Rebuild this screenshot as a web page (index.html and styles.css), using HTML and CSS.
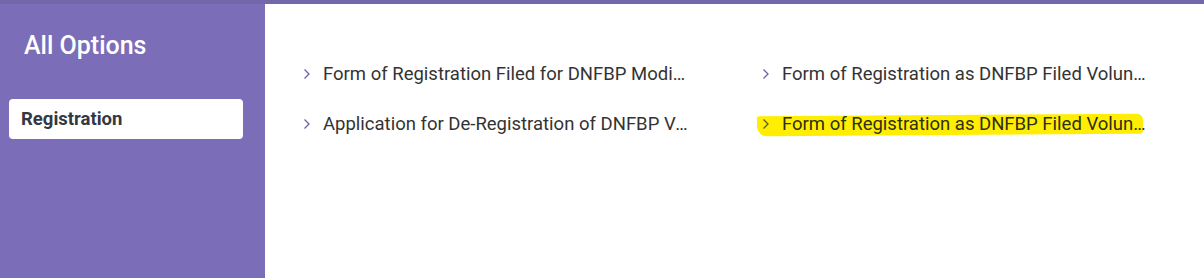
FILE: index.html
```html
<!DOCTYPE html>
<html lang="en">
<head>
  <meta charset="UTF-8">
  <meta name="viewport" content="width=device-width, initial-scale=1.0">
  <title>All Options</title>
  <link rel="stylesheet" href="styles.css">
</head>
<body>
  <div class="topbar"></div>
  <div class="page">
    <!-- sidebar -->
    <div class="sidebar">
      <h2 class="side_title">All Options</h2>
      <div class="side_item active">Registration</div>
    </div>

    <!-- option list -->
    <div class="content">
      <div class="options">
        <div class="opt">
          <svg class="chev" width="8" height="12" viewBox="0 0 8 12"><polyline points="1.5,1.5 6,6 1.5,10.5" /></svg>
          <span class="opt_text">Form of Registration Filed for DNFBP Modification of Registration</span>
        </div>
        <div class="opt">
          <svg class="chev" width="8" height="12" viewBox="0 0 8 12"><polyline points="1.5,1.5 6,6 1.5,10.5" /></svg>
          <span class="opt_text">Form of Registration as DNFBP Filed Voluntarily</span>
        </div>
        <div class="opt">
          <svg class="chev" width="8" height="12" viewBox="0 0 8 12"><polyline points="1.5,1.5 6,6 1.5,10.5" /></svg>
          <span class="opt_text">Application for De-Registration of DNFBP Voluntarily</span>
        </div>
        <div class="opt marked">
          <svg class="chev" width="8" height="12" viewBox="0 0 8 12"><polyline points="1.5,1.5 6,6 1.5,10.5" /></svg>
          <span class="opt_text">Form of Registration as DNFBP Filed Voluntarily by Others</span>
        </div>
      </div>
    </div>
  </div>
</body>
</html>
```

FILE: styles.css
```css
* {
  box-sizing: border-box;
  margin: 0;
}
body {
  font-family: Roboto, "Liberation Sans", sans-serif;
  background: #fff;
  height: 278px;
  overflow: hidden;
}
.topbar {
  height: 4px;
  background: #7466aa;
}
.page {
  display: flex;
  height: 274px;
}

.sidebar {
  width: 265px;
  flex-shrink: 0;
  background: #7b6db8;
  padding: 27px 22px 0 9px;
}
.side_title {
  color: #fff;
  font-size: 25px;
  font-weight: 500;
  padding-left: 15px;
  line-height: 30px;
  margin-bottom: 38px;
}
.side_item {
  background: #fff;
  border-radius: 4px;
  height: 40px;
  padding: 0 12px;
  display: flex;
  align-items: center;
  font-size: 18.5px;
  font-weight: 700;
  color: #333845;
}

.content {
  flex: 1;
  padding: 56px 0 0 38px;
}
.options {
  display: grid;
  grid-template-columns: 459px 459px;
  row-gap: 22px;
}
.opt {
  display: flex;
  align-items: center;
  height: 28px;
  position: relative;
}
.chev {
  fill: none;
  stroke: #6b60ad;
  stroke-width: 1.3;
  margin-right: 12px;
  flex-shrink: 0;
  position: relative;
  z-index: 1;
}
.opt_text {
  font-size: 18.5px;
  color: #333;
  white-space: nowrap;
  overflow: hidden;
  text-overflow: ellipsis;
  max-width: 368px;
  position: relative;
  z-index: 1;
}

/* highlighter mark drawn over the last row */
.marked::before {
  content: "";
  position: absolute;
  left: -5px;
  top: 5px;
  width: 386px;
  height: 20px;
  background: #ffee00;
  border-radius: 2px 6px 4px 10px;
  transform: rotate(-0.4deg);
}
.marked .chev {
  stroke: #5a5a2a;
}
.marked .opt_text {
  color: #2e2e1a;
}
```
